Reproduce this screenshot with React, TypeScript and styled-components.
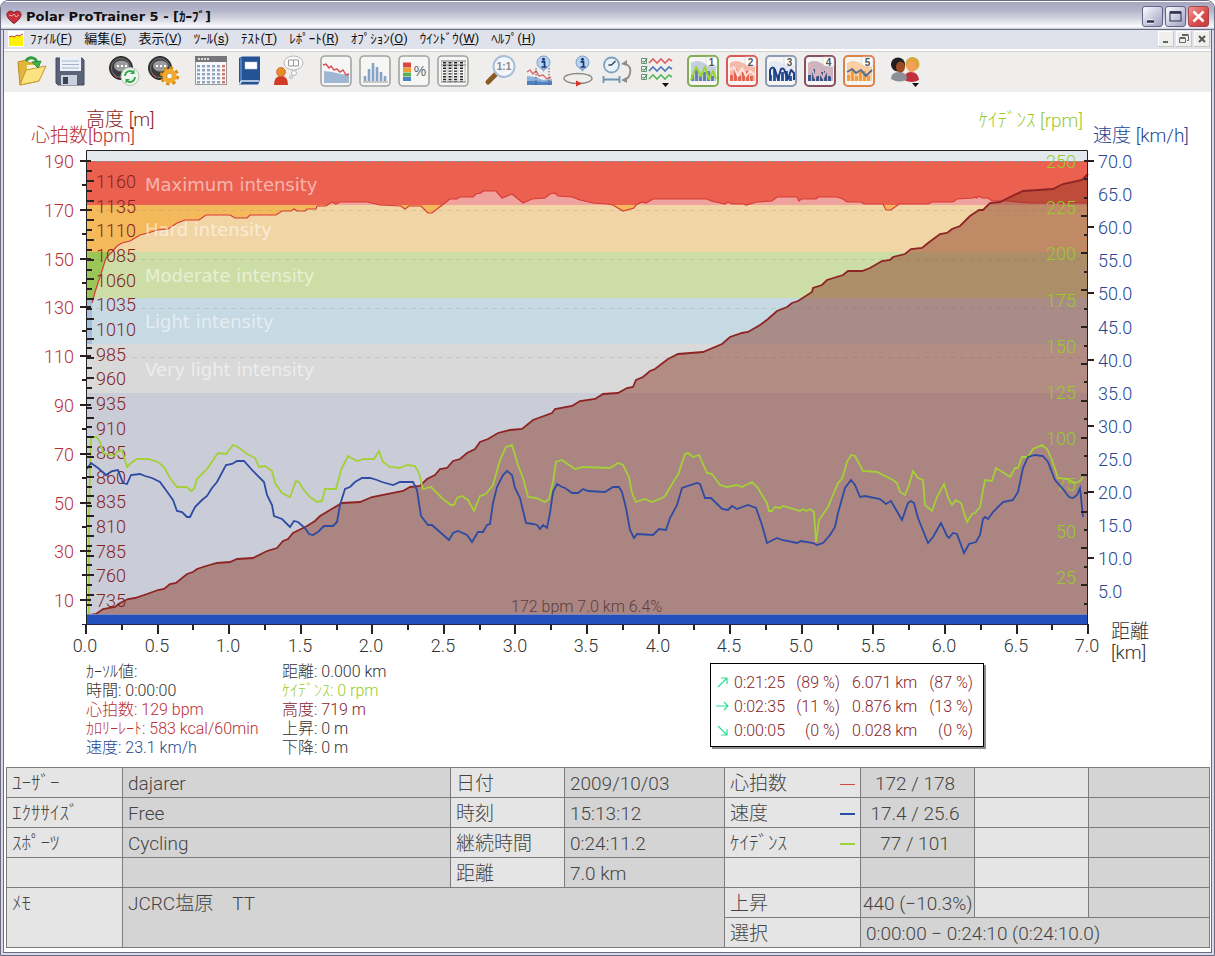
import React from "react";
import styled, { createGlobalStyle } from "styled-components";

const UI_FONT = `Roboto, "Noto Sans CJK JP", sans-serif`;

const GlobalStyle = createGlobalStyle`
  * { box-sizing: border-box; }
  body { margin: 0; background: #fff; font-family: ${UI_FONT}; font-weight: 300; color: #3c3c3c; }
  button { font: inherit; color: inherit; border: 0; padding: 0; background: none; }
`;

/* ---------- window frame ---------- */

const Window = styled.div`
  min-height: 100vh;
  display: flex;
  flex-direction: column;
  border: 1px solid #6c6b86;
  border-radius: 8px 8px 0 0;
  background: #d9d9e5;
  overflow: hidden;
`;

const TitleBar = styled.header`
  height: 29px;
  display: flex;
  align-items: center;
  gap: 4px;
  padding: 2px 5px 0 5px;
  border-top: 1px solid #fff;
  border-bottom: 1px solid #6c6b86;
  background: linear-gradient(#a6a6bf, #b4b4ca 30%, #d2d2df 60%, #fbfbfd 92%, #c4c4d4);
`;

const Title = styled.h1`
  flex: 1;
  margin: 0;
  font: bold 13px/16px "DejaVu Sans", "Noto Sans CJK JP", sans-serif;
  color: #111;
`;

const ButtonRow = styled.div<{ $gap: number }>`
  display: flex;
  gap: ${(p) => p.$gap}px;
`;

const CaptionButton = styled.button<{ $danger?: boolean }>`
  width: 21px;
  height: 21px;
  border: 1px solid ${(p) => (p.$danger ? "#a8434c" : "#62648a")};
  border-radius: 3px;
  background: ${(p) =>
    p.$danger ? "linear-gradient(135deg, #ee9a94, #d84a48 60%, #c63c40)" : "linear-gradient(135deg, #fdfdff, #c3c4d8 60%, #9fa1bf)"};
  svg { display: block; }
`;

const ChildButton = styled.button`
  width: 16px;
  height: 16px;
  background: #efefec;
  box-shadow: inset -1px -1px #c9c9c4, inset 1px 1px #fff;
  svg { display: block; }
`;

const Client = styled.main`
  flex: 1;
  display: flex;
  flex-direction: column;
  margin: 0 2px 2px;
  border: 1px solid #6c6b86;
  border-top: 0;
  background: #fff;
`;

const MenuBar = styled.nav`
  height: 21px;
  display: flex;
  align-items: center;
  padding: 0 1px 2px 4px;
  background: #dfe1eb;
  border-bottom: 2px solid #fff;
`;

const MenuItems = styled.div`
  flex: 1;
  display: flex;
  gap: 12px;
  padding-left: 6px;
`;

const MenuItem = styled.button`
  font: 400 13px/16px ${UI_FONT};
  color: #111;
  white-space: nowrap;
`;

const ToolBar = styled.div`
  height: 41px;
  display: flex;
  gap: 8px;
  padding-left: 8px;
  border-top: 1px solid #d2d2d0;
  background: #efeeec;
`;

const ToolGroup = styled.div<{ $wide?: boolean }>`
  display: flex;
  margin-right: ${(p) => (p.$wide ? 8 : 0)}px;
`;

const ToolButton = styled.button`
  width: 39px;
  height: 39px;
  svg { display: block; }
`;

/* ---------- tool icons ---------- */

const Icon = ({ children }: { children: React.ReactNode }) => (
  <svg width="39" height="39" viewBox="0 0 39 39" fill="none" aria-hidden="true">
    {children}
  </svg>
);

const Watch = () => (
  <>
    <circle cx="15" cy="16" r="11.5" fill="#3a3a3c" stroke="#222" />
    <circle cx="15" cy="16" r="9.5" stroke="#77777b" strokeWidth="1" />
    <ellipse cx="15.500" cy="14" rx="7.500" ry="5.500" fill="#9b9c9f" />
    <path d="M11 14h2M15 14h2M19 14h2" stroke="#fff" strokeWidth="2" />
    <path d="M7 22l4 4" stroke="#c33" strokeWidth="1" />
  </>
);

const InfoPin = () => (
  <>
    <path d="M20 15l3.500 5 3.500-5z" fill="#8fb0d8" />
    <circle cx="23.500" cy="10.500" r="6.500" fill="#b9d2ee" stroke="#7d9cc4" />
    <circle cx="23.500" cy="7.200" r="1.500" fill="#14387c" />
    <path d="M21.500 9.800h3v5M21.500 15h5" stroke="#14387c" strokeWidth="1.700" />
  </>
);

const Framed = ({ children }: { children: React.ReactNode }) => (
  <Icon>
    <rect x="4" y="4" width="30" height="30" rx="4" fill="#f6f6f5" stroke="#a3a3a3" strokeWidth="1.600" />
    {children}
  </Icon>
);

const Preset = ({ n, frame, tint, bars, line, path }: { n: number; frame: string; tint: string; bars: string; line: string; path: string }) => (
  <Icon>
    <rect x="4" y="4" width="30" height="30" rx="4" fill="#f7f5f3" stroke={frame} strokeWidth="2" />
    <path d="M7 11q6-4 13 0t12 4v14h-25z" fill={tint} />
    <path d="M8.500 29v-6M12.500 29v-12M16.500 29v-5M20.500 29v-9M24.500 29v-10M28.500 29v-5" stroke={bars} strokeWidth="2.800" />
    <path d={path} stroke={line} strokeWidth="2" strokeLinejoin="round" />
    <path d="M22 5h8q3 0 3 3v6h-8q-3 0-3-3z" fill="#fff" stroke="#ccc" strokeWidth="0.600" />
    <text x="27.500" y="13.500" textAnchor="middle" fontFamily="Liberation Sans, sans-serif" fontSize="10" fontWeight="700" fill="#555">
      {n}
    </text>
  </Icon>
);

const Caret = () => <path d="M25 31h7l-3.500 4z" fill="#111" />;

const calendarDots: React.ReactNode[] = [];
for (let r = 0; r < 5; r++)
  for (let c = 0; c < 6; c++)
    calendarDots.push(<rect key={`${r}-${c}`} x={5 + c * 5} y={13 + r * 4} width="3" height="2.400" fill={c === 5 ? "#d9736c" : "#8fa3bd"} />);

type Tool = { label: string; icon: React.ReactNode };

const toolGroups: Tool[][] = [
  [
    {
      label: "開く",
      icon: (
        <Icon>
          <path d="M6 10l8-2 3 3 10-1v19l-19 4z" fill="#e2b53c" stroke="#b98a22" />
          <path d="M15 13h12v10h-12z" fill="#fff7d4" />
          <path d="M8 33l6-15 20-4-7 15z" fill="#fbe382" stroke="#c29830" />
          <path d="M14 9c3-5 10-4 11 2" stroke="#2f9e3c" strokeWidth="3" />
          <path d="M20 10l9-1-3 7z" fill="#3db54a" stroke="#1f7d2c" strokeWidth="0.800" />
        </Icon>
      ),
    },
    {
      label: "保存",
      icon: (
        <Icon>
          <path d="M5 6h26l2 2v25h-26l-2-2z" fill="#5b6379" stroke="#444b60" />
          <rect x="9" y="5" width="21" height="14" fill="#eef2f8" />
          <path d="M11 9h17M11 12.500h17M11 16h17" stroke="#a5b3cb" />
          <rect x="10" y="23" width="16" height="10" fill="#c9cfdb" />
          <rect x="12" y="25" width="5" height="7" fill="#3b4257" />
        </Icon>
      ),
    },
  ],
  [
    {
      label: "転送",
      icon: (
        <Icon>
          <Watch />
          <circle cx="24" cy="24.500" r="9" fill="#eef5ee" stroke="#b8c4b8" />
          <path d="M19 24a5 5 0 0 1 8.500-3.500M29 25a5 5 0 0 1-8.500 3.500" stroke="#35a84f" strokeWidth="1.800" />
          <path d="M28.500 17.500v4.500h-4.500zM19.500 31.500v-4.500h4.500z" fill="#35a84f" />
        </Icon>
      ),
    },
    {
      label: "設定",
      icon: (
        <Icon>
          <Watch />
          <circle cx="24.500" cy="24" r="7.800" stroke="#d98d16" strokeWidth="3.600" strokeDasharray="3.200 2.930" />
          <circle cx="24.500" cy="24" r="5" stroke="#f3a92a" strokeWidth="4.400" />
          <circle cx="24.500" cy="24" r="2.800" fill="#fff" stroke="#b87713" strokeWidth="0.600" />
        </Icon>
      ),
    },
  ],
  [
    {
      label: "カレンダー",
      icon: (
        <Icon>
          <rect x="3.500" y="4.500" width="31" height="28" fill="#f6f8fb" stroke="#999" />
          <rect x="3" y="4" width="32" height="6" fill="#77777a" />
          <path d="M6 7h12" stroke="#ddd" strokeWidth="2" strokeDasharray="2 1" />
          {calendarDots}
        </Icon>
      ),
    },
    {
      label: "日誌",
      icon: (
        <Icon>
          <path d="M8 6l3-1.500h18v24l-2 4h-19z" fill="#245394" />
          <path d="M10 6v23" stroke="#5f8fcd" strokeWidth="1.500" />
          <path d="M8.500 32l2-3h18" stroke="#dce6f3" strokeWidth="1.600" />
          <rect x="14" y="10" width="12" height="7" fill="#fff" stroke="#b9cbe3" strokeWidth="0.500" />
        </Icon>
      ),
    },
    {
      label: "ユーザー",
      icon: (
        <Icon>
          <ellipse cx="23.500" cy="11" rx="9.500" ry="7" fill="#fafafa" stroke="#b8b8b8" />
          <path d="M18.500 8h10v6h-10zM23.500 8v6" stroke="#999" />
          <circle cx="24" cy="21" r="2.500" fill="#fafafa" stroke="#b8b8b8" />
          <circle cx="21" cy="25" r="1.500" fill="#fafafa" stroke="#b8b8b8" />
          <path d="M4 33q0-9 7-9t7 9z" fill="#cf3b26" />
          <circle cx="11" cy="20" r="4.500" fill="#e98a2c" stroke="#b9641a" strokeWidth="0.700" />
        </Icon>
      ),
    },
  ],
  [
    {
      label: "カーブ",
      icon: (
        <Framed>
          <path d="M7 19l8 1 9 2 8 1v8h-25z" fill="#9fb7d3" />
          <path d="M6 13l3-1 3 4 2-2 3 4 3-1 3 3 3-2 3 5 3-1" stroke="#dc4a50" strokeWidth="1.400" />
        </Framed>
      ),
    },
    {
      label: "分布",
      icon: (
        <Framed>
          <path d="M7 30h25" stroke="#999" />
          <path d="M9 29v-5M13 29v-12M17 29v-18M21 29v-14M25 29v-9M29 29v-5" stroke="#85a3c4" strokeWidth="2.600" />
        </Framed>
      ),
    },
    {
      label: "ゾーン",
      icon: (
        <Framed>
          <path d="M8 13h8" stroke="#d9463c" strokeWidth="5" />
          <path d="M8 18h8" stroke="#f0a030" strokeWidth="4" />
          <path d="M8 22.500h8" stroke="#58b050" strokeWidth="4" />
          <path d="M8 27h8" stroke="#4a86c8" strokeWidth="4" />
          <text x="25" y="24" textAnchor="middle" fontFamily="Liberation Sans, sans-serif" fontSize="14" fill="#666">
            %
          </text>
        </Framed>
      ),
    },
    {
      label: "一覧",
      icon: (
        <Framed>
          <path d="M7 9h25M7 13h25M7 30h25" stroke="#777" />
          <path d="M7.500 9v21M13 9v21M18.500 9v21M24 9v21M31 9v21" stroke="#aaa" strokeWidth="0.700" />
          <path d="M10.500 10v20M16 10v20M21.500 10v20M27.500 10v20" stroke="#222" strokeWidth="3" strokeDasharray="1.400 1.400" />
        </Framed>
      ),
    },
  ],
  [
    {
      label: "等倍",
      icon: (
        <Icon>
          <path d="M15 22l-8 8" stroke="#8a5a24" strokeWidth="5" strokeLinecap="round" />
          <circle cx="23" cy="14.500" r="10.500" fill="#f3f7fc" stroke="#a9bdd6" strokeWidth="2" />
          <text x="23" y="18" textAnchor="middle" fontFamily="Liberation Sans, sans-serif" fontSize="10" fontWeight="700" fill="#888">
            1:1
          </text>
        </Icon>
      ),
    },
    {
      label: "カーブ情報",
      icon: (
        <Icon>
          <path d="M7 24l8 1 8 3 9-1v6h-25z" fill="#8fb2dc" />
          <path d="M7 29l8 0 8 1 9-1v4h-25z" fill="#4f80bf" />
          <path d="M7 20l3-2 3 4 3-3 3 5 4-1 4 4 4-2" stroke="#e06a6c" strokeWidth="1.400" />
          <path d="M16 16v17M29 16v17" stroke="#555" strokeDasharray="1.500 1.500" />
          <InfoPin />
        </Icon>
      ),
    },
    {
      label: "ラップ情報",
      icon: (
        <Icon>
          <ellipse cx="19" cy="26.500" rx="14" ry="5" stroke="#888" strokeWidth="1.400" />
          <path d="M17 28.500l6 3-6 3z" fill="#d8322c" />
          <InfoPin />
        </Icon>
      ),
    },
    {
      label: "時間／距離",
      icon: (
        <Icon>
          <circle cx="13.500" cy="13" r="7.500" fill="#e9f2fb" stroke="#7fa2bd" strokeWidth="1.800" />
          <path d="M13.500 13l4-4M13.500 13h-3" stroke="#345" strokeWidth="1.400" />
          <path d="M5.500 24v7M21.500 24v7M6 27.500h15" stroke="#6d93b3" strokeWidth="1.800" />
          <path d="M26 11q8 3 6 10-1 6-6 7" stroke="#8d8d8d" strokeWidth="1.800" />
          <path d="M23 12l6-4v6zM23 28l6-3v6z" fill="#8d8d8d" />
        </Icon>
      ),
    },
    {
      label: "カーブ選択",
      icon: (
        <Icon>
          {["#e06060", "#5078b8", "#58b858"].map((c, i) => (
            <g key={c} transform={`translate(0 ${i * 8})`}>
              <path d="M4.500 6.500h5v5h-5z" stroke="#5a8a68" strokeWidth="0.900" />
              <path d="M5.500 9l1.500 1.500 3-4" stroke="#2c7a44" />
              <path d="M12 11l4-4 4 4 4-4 4 4 4-4 3 2" stroke={c} strokeWidth="1.600" />
            </g>
          ))}
          <Caret />
        </Icon>
      ),
    },
  ],
  [
    { label: "表示1", icon: <Preset n={1} frame="#7fae55" tint="#c3cfdd" bars="#5f7fa8" line="#9ad62c" path="M7 28l5-13 5 9 4-9 4 12 4-8 3 8" /> },
    { label: "表示2", icon: <Preset n={2} frame="#d55a5a" tint="#f5b9a8" bars="#e2624e" line="#fbe2de" path="M7 18l4-3 4 9 4-8 4 8 4-5 5 4" /> },
    { label: "表示3", icon: <Preset n={3} frame="#8b9bb4" tint="#e3e9f2" bars="#24509c" line="#1d3f86" path="M8 28v-10q3-5 5 0l3 9 3-10q3-2 4 3l3 7 3-9 3 3v7" /> },
    { label: "表示4", icon: <Preset n={4} frame="#85505f" tint="#c9b4bf" bars="#2f4f84" line="#dfb5bb" path="M7 15l3-2 4 13 3-9 5 9 4-8 5 7" /> },
    { label: "表示5", icon: <Preset n={5} frame="#dd8246" tint="#f8cfa0" bars="#f09a3c" line="#5d6f90" path="M7 20l5-3 4 4 5-3 5 6 6-6" /> },
  ],
  [
    {
      label: "ユーザー選択",
      icon: (
        <Icon>
          <path d="M17 28q0-8 7-8t8 8q-7 4-15 0z" fill="#c22f3c" />
          <circle cx="25.500" cy="12" r="7" fill="#d9a73c" />
          <ellipse cx="24.500" cy="14.500" rx="4.500" ry="5.500" fill="#f2a05c" />
          <path d="M4 27q0-7 8-7t8 7q-7 5-16 0z" fill="#8b8f98" />
          <circle cx="11" cy="12.500" r="7" fill="#1f1f22" />
          <ellipse cx="13.500" cy="15" rx="4.500" ry="5.500" fill="#9c4a22" />
          <Caret />
        </Icon>
      ),
    },
  ],
];

/* ---------- curve chart ---------- */

type P = [number, number];

const heartRate: P[] = [[92,303],[95,292],[100,277],[106,258],[112,252],[117,246],[122,243],[130,241],[140,235],[148,233],[157,230],[168,229],[177,223],[185,220],[199,220],[206,215],[230,215],[235,218],[247,218],[250,215],[276,215],[282,211],[291,211],[294,209],[297,211],[305,211],[307,209],[316,209],[317,206],[326,206],[332,202],[336,204],[340,202],[367,202],[380,205],[401,206],[405,209],[409,206],[421,206],[428,213],[432,213],[441,206],[450,199],[457,199],[460,197],[473,197],[476,194],[481,193],[483,191],[496,191],[502,198],[512,194],[523,203],[532,199],[545,198],[550,194],[555,193],[558,196],[572,197],[580,200],[593,203],[607,204],[613,205],[623,211],[634,208],[636,205],[642,202],[646,203],[653,199],[707,199],[711,201],[720,203],[725,204],[728,202],[732,204],[743,204],[746,205],[757,202],[772,201],[777,197],[797,197],[799,201],[801,199],[816,199],[818,197],[837,197],[843,199],[847,202],[861,202],[864,204],[883,204],[886,210],[891,210],[899,204],[928,204],[932,202],[953,202],[957,199],[973,198],[975,197],[977,198],[979,196],[982,198],[988,198],[992,201],[1007,201],[1030,203],[1088,203]];

const altitude: P[] = [[90,615],[96,614],[103,609],[115,607],[120,603],[128,599],[135,598],[147,594],[158,590],[164,589],[170,584],[176,583],[187,574],[193,572],[197,569],[206,566],[217,563],[230,562],[237,559],[253,558],[267,551],[277,548],[283,541],[288,539],[293,533],[307,526],[315,521],[320,516],[330,510],[342,503],[360,502],[372,497],[403,491],[410,487],[420,486],[427,479],[435,475],[440,469],[447,468],[453,461],[460,459],[467,453],[475,449],[480,442],[488,439],[498,433],[510,430],[522,429],[533,420],[552,413],[555,409],[572,406],[580,401],[595,399],[603,394],[618,393],[627,388],[633,387],[636,380],[643,377],[650,371],[655,369],[668,359],[678,354],[703,352],[722,344],[730,337],[742,333],[748,332],[760,325],[768,319],[777,311],[787,307],[792,303],[798,301],[812,292],[813,288],[822,285],[827,280],[843,275],[848,271],[862,271],[870,268],[882,261],[890,260],[893,257],[905,254],[911,249],[922,248],[928,243],[940,234],[947,233],[952,229],[960,226],[970,216],[979,210],[983,210],[990,203],[1000,202],[1012,196],[1023,191],[1053,189],[1063,184],[1082,180],[1088,174]];

const cadence: P[] = [[89,614],[89,520],[90,470],[91,437],[97,437],[100,442],[103,453],[115,456],[117,452],[122,450],[127,467],[131,463],[137,459],[148,459],[158,462],[164,467],[170,478],[177,487],[187,487],[191,491],[194,489],[197,479],[207,469],[218,453],[226,454],[233,445],[238,447],[247,454],[255,458],[259,467],[265,466],[272,471],[275,483],[282,493],[290,497],[296,481],[299,482],[303,489],[310,497],[317,502],[322,501],[325,489],[336,489],[341,470],[348,456],[357,461],[364,459],[374,459],[379,451],[383,462],[390,467],[400,468],[407,465],[415,466],[419,473],[423,489],[431,487],[443,499],[451,505],[454,505],[457,498],[462,496],[468,500],[474,511],[480,496],[486,494],[493,485],[500,460],[506,447],[512,445],[518,465],[523,478],[528,497],[536,498],[545,502],[549,499],[553,482],[556,462],[562,460],[575,469],[583,467],[610,468],[618,463],[623,465],[629,477],[632,493],[636,502],[645,499],[652,502],[662,498],[665,496],[675,479],[678,475],[685,454],[688,453],[693,457],[699,455],[707,473],[712,474],[720,485],[727,487],[737,485],[742,487],[752,482],[758,488],[762,495],[767,503],[769,511],[772,511],[775,507],[780,508],[783,506],[800,511],[803,509],[806,511],[810,509],[814,512],[816,542],[819,520],[828,507],[838,483],[842,479],[847,462],[851,455],[855,456],[863,471],[877,472],[893,480],[897,483],[900,492],[905,495],[909,485],[913,471],[918,478],[923,480],[925,505],[932,511],[937,497],[944,484],[949,500],[952,505],[956,500],[961,503],[967,522],[972,514],[975,513],[980,507],[985,480],[992,481],[996,468],[1001,471],[1010,477],[1015,468],[1018,468],[1022,457],[1028,457],[1033,449],[1042,445],[1047,449],[1052,460],[1058,478],[1067,479],[1075,483],[1080,481],[1083,477]];

const speed: P[] = [[87,469],[91,463],[98,468],[106,475],[112,471],[118,470],[123,483],[127,484],[131,475],[140,474],[145,476],[152,478],[160,482],[168,493],[173,500],[177,511],[182,512],[187,517],[190,517],[195,507],[202,500],[207,496],[212,488],[217,482],[226,465],[232,464],[237,461],[244,461],[253,471],[264,482],[267,495],[272,505],[274,516],[282,519],[290,527],[294,521],[298,522],[305,528],[309,534],[313,535],[318,532],[324,526],[333,526],[337,522],[340,505],[345,489],[350,487],[355,482],[362,478],[370,478],[377,480],[382,482],[393,485],[400,482],[413,482],[417,490],[421,516],[428,525],[432,525],[449,540],[453,533],[458,531],[467,535],[472,542],[478,532],[483,532],[487,525],[490,524],[493,503],[497,487],[503,475],[507,471],[512,475],[515,488],[520,498],[526,523],[533,524],[537,525],[540,529],[543,525],[547,528],[550,513],[553,492],[557,484],[562,487],[565,488],[572,493],[578,493],[583,489],[588,491],[605,492],[613,487],[619,487],[622,492],[626,508],[630,530],[634,538],[637,534],[653,535],[659,529],[666,530],[670,518],[677,505],[682,488],[697,483],[700,484],[705,498],[711,498],[722,509],[728,510],[732,506],[737,509],[748,505],[756,508],[762,525],[767,543],[773,540],[777,538],[782,540],[797,543],[801,541],[813,543],[817,545],[823,543],[830,535],[835,527],[838,513],[845,488],[851,480],[855,485],[860,497],[865,496],[880,499],[886,504],[891,501],[902,520],[908,503],[911,501],[914,503],[918,518],[928,543],[933,537],[941,523],[947,536],[949,538],[953,533],[957,534],[964,553],[969,544],[976,542],[980,535],[983,519],[985,517],[988,519],[993,512],[1003,502],[1013,500],[1018,492],[1023,468],[1028,457],[1035,455],[1043,456],[1048,462],[1055,480],[1063,489],[1069,497],[1073,498],[1077,495],[1080,488],[1083,517]];

const pts = (p: P[]) => p.map((q) => q.join(",")).join(" ");
const range = (n: number) => Array.from({ length: n }, (_, i) => i);

const zones = [
  { y: 161, h: 44, strong: "#ec6050", pale: "#f0a29e", label: "Maximum intensity", ty: 191 },
  { y: 205, h: 47, strong: "#f4b95b", pale: "#f2d5a5", label: "Hard intensity", ty: 236 },
  { y: 252, h: 46, strong: "#9bc657", pale: "#ccdea6", label: "Moderate intensity", ty: 282 },
  { y: 298, h: 46, strong: "#a5bfdc", pale: "#c7d9e3", label: "Light intensity", ty: 328 },
  { y: 344, h: 49, strong: "#d9d9d9", pale: "#d9d9d9", label: "Very light intensity", ty: 376 },
];

const ChartSvg = styled.svg`
  display: block;
  width: 100%;
  height: auto;
  overflow: visible;
  font-family: ${UI_FONT};
  font-size: 18px;
  font-weight: 300;
`;

const ZoneLabel = styled.text`
  font-family: "DejaVu Sans", sans-serif;
  font-size: 18px;
  font-weight: 400;
  fill: #fff;
  fill-opacity: 0.55;
`;

const RED = "#bb2f33";
const BROWN = "#85241f";
const GREEN = "#98cb2c";
const BLUE = "#274690";

const Chart = () => (
  <ChartSvg viewBox="4 92 1207 568" role="img" aria-label="カーブ">
    <defs>
      <clipPath id="under-hr">
        <polygon points={`92,614 ${pts(heartRate)} 1088,614`} />
      </clipPath>
    </defs>

    <rect x="87" y="151" width="1001" height="10" fill="#e3e8ee" />
    {zones.map((z) => (
      <rect key={z.y} x="87" y={z.y} width="1001" height={z.h} fill={z.strong} />
    ))}
    <g clipPath="url(#under-hr)">
      {zones.map((z) => (
        <rect key={z.y} x="87" y={z.y} width="1001" height={z.h} fill={z.pale} />
      ))}
    </g>
    <rect x="87" y="344" width="5" height="49" fill="#d9d9d9" />
    <rect x="87" y="393" width="1001" height="222" fill="#cacdd8" />
    <path d="M87 161.500h1001" stroke="#8d8f98" strokeDasharray="5 4" />
    <path d="M87 210.500h1001M87 259.500h1001M87 308.500h1001M87 357.500h1001" stroke="#8a8f80" strokeOpacity="0.250" strokeDasharray="5 4" />
    <polyline points={pts(heartRate)} fill="none" stroke="#d83a34" strokeWidth="1.200" />
    {zones.map((z) => (
      <ZoneLabel key={z.label} x="145" y={z.ty}>
        {z.label}
      </ZoneLabel>
    ))}

    <polygon points={`${pts(altitude)} 1088,615 90,615`} fill="#883623" fillOpacity="0.470" />
    <polyline points={pts(altitude)} fill="none" stroke="#8e2423" strokeWidth="1.800" />
    <g fill={BROWN}>
      {range(18).map((i) => (
        <text key={i} x="96" y={Math.round(188 + i * 24.65)}>
          {1160 - i * 25}
        </text>
      ))}
    </g>
    <g fill={GREEN} textAnchor="end">
      {range(10).map((i) => (
        <text key={i} x="1076" y={Math.round(168 + i * 46.2)}>
          {250 - i * 25}
        </text>
      ))}
    </g>
    <polyline points={pts(cadence)} fill="none" stroke="#a3cf38" strokeWidth="1.800" />
    <polyline points={pts(speed)} fill="none" stroke="#2d4ba3" strokeWidth="1.800" />
    <text x="511" y="612" fontSize="16" fill="#5b4040">
      172 bpm 7.0 km 6.4%
    </text>

    <rect x="87" y="614" width="1001" height="1" fill="#7f86b8" />
    <rect x="87" y="615" width="1001" height="9" fill="#2350ba" />
    <path d="M86.500 625V150.500H1087.500V625" fill="none" stroke="#222" />
    <path d="M82 624.500H1089" stroke="#26264a" />

    <g stroke="#2a2020" strokeWidth="2">
      {range(10).map((i) => (
        <path key={i} d={`M80 ${Math.round(161 + i * 48.8)}h11`} />
      ))}
      {range(9).map((i) => (
        <path key={i} d={`M82 ${Math.round(185 + i * 48.8)}h5`} />
      ))}
      {range(45).map((i) => (
        <path key={i} d={`M87 ${Math.round(171 + i * 9.86)}h${i % 2 ? 7 : 5}`} />
      ))}
      {range(25).map((i) => {
        const len = i > 1 && i % 2 ? 7 : 4;
        return <path key={i} d={`M1088 ${Math.round(161 + i * 18.45)}h${-len}`} />;
      })}
      {range(7).map((i) => (
        <path key={i} d={`M1088 ${Math.round(161 + i * 66.2)}h6`} />
      ))}
      {range(29).map((i) => (
        <path key={i} d={`M${Math.round(86 + i * 35.79)} 625v${i % 2 ? 5 : 9}`} />
      ))}
    </g>

    <g fill={RED} textAnchor="end">
      {range(10).map((i) => (
        <text key={i} x="74" y={Math.round(168 + i * 48.8)}>
          {190 - i * 20}
        </text>
      ))}
    </g>
    <g fill={BLUE}>
      {range(14).map((i) => (
        <text key={i} x="1098" y={Math.round(168 + i * 33.1)}>
          {(70 - i * 5).toFixed(1)}
        </text>
      ))}
    </g>
    <g fill="#333" textAnchor="middle">
      {range(15).map((i) => (
        <text key={i} x={Math.round(85 + i * 71.6)} y="652">
          {(i / 2).toFixed(1)}
        </text>
      ))}
    </g>
    <g fontSize="19">
      <text x="31" y="142" fill={RED}>心拍数[bpm]</text>
      <text x="86" y="126" fill={BROWN}>高度 [m]</text>
      <text x="1083" y="127" fill={GREEN} textAnchor="end">ｹｲﾃﾞﾝｽ [rpm]</text>
      <text x="1093" y="142" fill={BLUE}>速度 [km/h]</text>
      <text x="1111" y="638" fill="#333">距離</text>
      <text x="1111" y="659" fill="#333">[km]</text>
    </g>
  </ChartSvg>
);

/* ---------- cursor values and slope summary ---------- */

const InfoRow = styled.section`
  display: grid;
  grid-template-columns: 82fr 196fr 428fr 274px 227fr;
  align-items: start;
  height: 107px;
  font-size: 16px;
`;

const ValueList = styled.ul<{ $column: number }>`
  grid-column: ${(p) => p.$column};
  margin: 2px 0 0;
  padding: 0;
  list-style: none;
`;

const Value = styled.li<{ $color?: string }>`
  line-height: 19px;
  height: 19px;
  white-space: nowrap;
  color: ${(p) => p.$color ?? "#333"};
`;

const SlopeBox = styled.div`
  grid-column: 4;
  margin-top: 3px;
  height: 84px;
  padding: 6px 10px 4px 5px;
  border: 1px solid #000;
  box-shadow: 2px 2px #8a8a8a;
  background: #fff;
`;

const SlopeTable = styled.table`
  width: 100%;
  border-collapse: collapse;
  color: #85241f;
  td { height: 24px; padding: 0; white-space: nowrap; }
  td:nth-child(1) { width: 18px; }
  td:nth-child(2) { width: 52px; }
  td:nth-child(3), td:nth-child(5) { text-align: right; }
  td:nth-child(3) { width: 54px; }
  td:nth-child(4) { padding-left: 12px; }
  svg { display: block; }
`;

const slopes = [
  { d: "M2 12L11 3M5 3h6v6", cells: ["0:21:25", "(89 %)", "6.071 km", "(87 %)"], name: "上り" },
  { d: "M0 7h12M8 3l4 4-4 4", cells: ["0:02:35", "(11 %)", "0.876 km", "(13 %)"], name: "平坦" },
  { d: "M2 3l9 9M5 12h6v-6", cells: ["0:00:05", "(0 %)", "0.028 km", "(0 %)"], name: "下り" },
];

/* ---------- exercise details ---------- */

const DetailTable = styled.table`
  width: calc(100% - 3px);
  margin: 0 1px 0 2px;
  table-layout: fixed;
  border-collapse: collapse;
  font-size: 19px;
  line-height: 24px;
  color: #444;
`;

const Cell = styled.td<{ $light?: boolean; $center?: boolean; $tight?: boolean }>`
  height: 30px;
  padding: 4px ${(p) => (p.$center ? 10 : p.$tight ? 2 : 5)}px 0 ${(p) => (p.$tight ? 2 : 5)}px;
  border: 1px solid #7c7c7c;
  background: ${(p) => (p.$light ? "#e5e5e5" : "#d4d4d4")};
  text-align: ${(p) => (p.$center ? "center" : "left")};
  vertical-align: top;
  white-space: nowrap;
`;

const Head = styled(Cell).attrs({ as: "th", scope: "row", $light: true })`
  font-weight: 300;
`;

const HeadRow = styled.span`
  display: flex;
  justify-content: space-between;
  align-items: center;
`;

const Swatch = styled.i<{ $color: string; $thin?: boolean }>`
  width: 15px;
  height: ${(p) => (p.$thin ? 1 : 2)}px;
  background: ${(p) => p.$color};
`;

const menus: [string, string][] = [
  ["ﾌｧｲﾙ", "F"], ["編集", "E"], ["表示", "V"], ["ﾂｰﾙ", "s"], ["ﾃｽﾄ", "T"],
  ["ﾚﾎﾟｰﾄ", "R"], ["ｵﾌﾟｼｮﾝ", "O"], ["ｳｲﾝﾄﾞｳ", "W"], ["ﾍﾙﾌﾟ", "H"],
];

export default function App() {
  return (
    <>
      <GlobalStyle />
      <Window>
        <TitleBar>
          <svg width="16" height="14" viewBox="0 0 16 14" aria-hidden="true">
            <path d="M8 13.500C3 10 1 7 1 4.500 1 1 6 0 8 3c2-3 7-2 7 1.500 0 2.500-2 5.500-7 9z" fill="#c8303c" stroke="#7a1c24" />
            <path d="M3 5l3 1 2-2 2 3 3-2" stroke="#f6a9a9" fill="none" />
          </svg>
          <Title>Polar ProTrainer 5 - [ｶｰﾌﾞ]</Title>
          <ButtonRow $gap={2}>
            <CaptionButton aria-label="最小化">
              <svg width="19" height="19"><path d="M4 14.500h7" stroke="#fff" strokeWidth="4" /><path d="M4 14.500h7" stroke="#2d2f55" strokeWidth="2.500" /></svg>
            </CaptionButton>
            <CaptionButton aria-label="最大化">
              <svg width="19" height="19"><rect x="4" y="5" width="11" height="9" fill="none" stroke="#2d2f55" /><path d="M4 5.500h11" stroke="#2d2f55" strokeWidth="2.500" /></svg>
            </CaptionButton>
            <CaptionButton aria-label="閉じる" $danger>
              <svg width="19" height="19"><path d="M4.500 4.500l10 10M14.500 4.500l-10 10" stroke="#fff" strokeWidth="2.600" /></svg>
            </CaptionButton>
          </ButtonRow>
        </TitleBar>
        <Client>
          <MenuBar>
            <svg width="16" height="16" viewBox="0 0 16 16" aria-hidden="true">
              <rect width="16" height="16" fill="#fff" />
              <path d="M1 6h4l2-1h8v10H1z" fill="#fff200" />
              <path d="M1 6l3-1 2 1 3-2 2 1 4-2" stroke="#c0392b" fill="none" />
            </svg>
            <MenuItems>
              {menus.map(([name, key]) => (
                <MenuItem key={key}>
                  {name}(<u>{key}</u>)
                </MenuItem>
              ))}
            </MenuItems>
            <ButtonRow $gap={2}>
              <ChildButton aria-label="子ウィンドウを最小化">
                <svg width="16" height="16"><path d="M5 11h5" stroke="#666" strokeWidth="2" /></svg>
              </ChildButton>
              <ChildButton aria-label="子ウィンドウを元に戻す">
                <svg width="16" height="16" fill="none" stroke="#666"><path d="M6 4.500h6.500v5H11M6 3.500h6.500" /><path d="M3.500 7.500h6v4h-6zM3.500 6.500h6" /></svg>
              </ChildButton>
              <ChildButton aria-label="子ウィンドウを閉じる">
                <svg width="16" height="16"><path d="M5 5l6 6M11 5l-6 6" stroke="#555" strokeWidth="2" /></svg>
              </ChildButton>
            </ButtonRow>
          </MenuBar>
          <ToolBar role="toolbar" aria-label="ツールバー">
            {toolGroups.map((group, i) => (
              <ToolGroup key={i} $wide={i === 0}>
                {group.map((t) => (
                  <ToolButton key={t.label} aria-label={t.label}>
                    {t.icon}
                  </ToolButton>
                ))}
              </ToolGroup>
            ))}
          </ToolBar>

          <Chart />

          <InfoRow>
            <ValueList $column={2}>
              <Value>ｶｰｿﾙ値:</Value>
              <Value>時間: 0:00:00</Value>
              <Value $color={RED}>心拍数: 129 bpm</Value>
              <Value $color={RED}>ｶﾛﾘｰﾚｰﾄ: 583 kcal/60min</Value>
              <Value $color={BLUE}>速度: 23.1 km/h</Value>
            </ValueList>
            <ValueList $column={3}>
              <Value>距離: 0.000 km</Value>
              <Value $color={GREEN}>ｹｲﾃﾞﾝｽ: 0 rpm</Value>
              <Value $color={BROWN}>高度: 719 m</Value>
              <Value>上昇: 0 m</Value>
              <Value>下降: 0 m</Value>
            </ValueList>
            <SlopeBox>
              <SlopeTable>
                <tbody>
                  {slopes.map((s) => (
                    <tr key={s.name}>
                      <td>
                        <svg width="14" height="14" role="img" aria-label={s.name}>
                          <path d={s.d} fill="none" stroke="#2fdc96" strokeWidth="1.200" />
                        </svg>
                      </td>
                      {s.cells.map((c, i) => (
                        <td key={i}>{c}</td>
                      ))}
                    </tr>
                  ))}
                </tbody>
              </SlopeTable>
            </SlopeBox>
          </InfoRow>

          <DetailTable>
            <colgroup>
              <col style={{ width: 116 }} />
              <col />
              <col style={{ width: 114 }} />
              <col style={{ width: 160 }} />
              <col style={{ width: 136 }} />
              <col style={{ width: 114 }} />
              <col style={{ width: 114 }} />
              <col style={{ width: 121 }} />
            </colgroup>
            <tbody>
              <tr>
                <Head>ﾕｰｻﾞｰ</Head>
                <Cell>dajarer</Cell>
                <Head>日付</Head>
                <Cell>2009/10/03</Cell>
                <Head><HeadRow>心拍数<Swatch $color="#d5493f" $thin /></HeadRow></Head>
                <Cell $center>172 / 178</Cell>
                <Cell $light />
                <Cell />
              </tr>
              <tr>
                <Head>ｴｸｻｻｲｽﾞ</Head>
                <Cell>Free</Cell>
                <Head>時刻</Head>
                <Cell>15:13:12</Cell>
                <Head><HeadRow>速度<Swatch $color="#2d4ba3" /></HeadRow></Head>
                <Cell $center>17.4 / 25.6</Cell>
                <Cell $light />
                <Cell />
              </tr>
              <tr>
                <Head>ｽﾎﾟｰﾂ</Head>
                <Cell>Cycling</Cell>
                <Head>継続時間</Head>
                <Cell>0:24:11.2</Cell>
                <Head><HeadRow>ｹｲﾃﾞﾝｽ<Swatch $color="#a3cf38" /></HeadRow></Head>
                <Cell $center>77 / 101</Cell>
                <Cell $light />
                <Cell />
              </tr>
              <tr>
                <Cell $light />
                <Cell />
                <Head>距離</Head>
                <Cell>7.0 km</Cell>
                <Cell $light />
                <Cell />
                <Cell $light />
                <Cell />
              </tr>
              <tr>
                <Head rowSpan={2}>ﾒﾓ</Head>
                <Cell rowSpan={2} colSpan={3}>JCRC塩原　TT</Cell>
                <Head>上昇</Head>
                <Cell $tight>440 (−10.3%)</Cell>
                <Cell $light />
                <Cell />
              </tr>
              <tr>
                <Head>選択</Head>
                <Cell colSpan={3}>0:00:00 − 0:24:10 (0:24:10.0)</Cell>
              </tr>
            </tbody>
          </DetailTable>
        </Client>
      </Window>
    </>
  );
}
